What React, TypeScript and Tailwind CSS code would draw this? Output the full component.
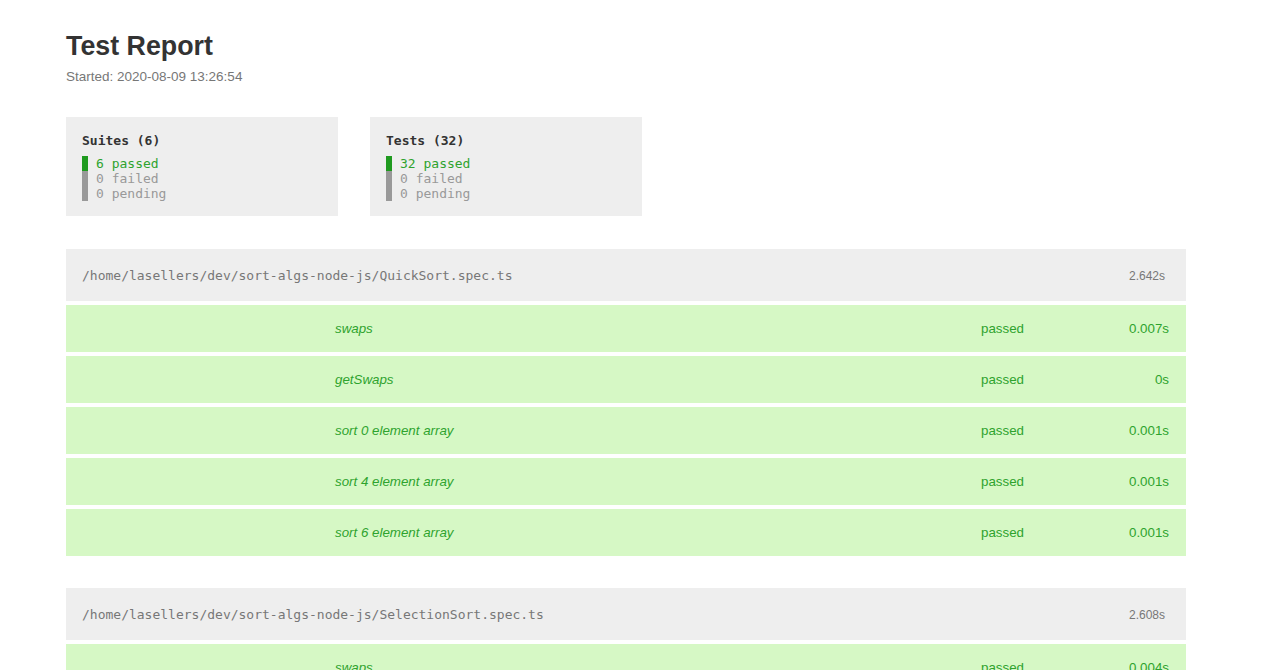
const suites = [
	{
		path: "/home/lasellers/dev/sort-algs-node-js/QuickSort.spec.ts",
		time: "2.642s",
		tests: [
			{ title: "swaps", time: "0.007s" },
			{ title: "getSwaps", time: "0s" },
			{ title: "sort 0 element array", time: "0.001s" },
			{ title: "sort 4 element array", time: "0.001s" },
			{ title: "sort 6 element array", time: "0.001s" },
		],
	},
	{
		path: "/home/lasellers/dev/sort-algs-node-js/SelectionSort.spec.ts",
		time: "2.608s",
		tests: [
			{ title: "swaps", time: "0.004s" },
			{ title: "getSwaps", time: "0s" },
			{ title: "sort 0 element array", time: "0.001s" },
			{ title: "sort 4 element array", time: "0s" },
			{ title: "sort 6 element array", time: "0.001s" },
		],
	},
	{
		path: "/home/lasellers/dev/sort-algs-node-js/BubbleSort.spec.ts",
		time: "2.611s",
		tests: [
			{ title: "swaps", time: "0.005s" },
			{ title: "getSwaps", time: "0s" },
			{ title: "sort 0 element array", time: "0.001s" },
			{ title: "sort 4 element array", time: "0.001s" },
			{ title: "sort 6 element array", time: "0s" },
		],
	},
];

export default function App() {
	return (
		<div className="min-h-screen bg-white pb-10 font-['Liberation_Sans',Arial,sans-serif] text-[#333]">
			<div className="ml-[66px] w-[1120px] pt-[31px]">
				<h1 className="text-[26.8px] font-bold leading-[30px] text-[#333]">Test Report</h1>
				<div className="mt-2 text-[13.5px] leading-4 text-[#777]">Started: 2020-08-09 13:26:54</div>

				<div className="mt-8 flex gap-8">
					<Summary title="Suites (6)" passed={6} />
					<Summary title="Tests (32)" passed={32} />
				</div>

				<div className="mt-[33px] flex flex-col gap-8">
					{suites.map((s) => (
						<div key={s.path} className="flex flex-col gap-1">
							<div className="flex h-[52px] items-center justify-between bg-[#eeeeee] pt-[2px] pr-[21px] pl-4">
								<span className="font-['DejaVu_Sans_Mono',monospace] text-[13px] text-[#777]">{s.path}</span>
								<span className="text-[12px] text-[#777]">{s.time}</span>
							</div>
							{s.tests.map((t) => (
								<div
									key={t.title}
									className="flex h-[47px] items-center bg-[#d6f8c5] pr-[17px] pl-[269px] text-[13.33px] text-[#2ea32e]"
								>
									<span className="w-[646px] italic">{t.title}</span>
									<span>passed</span>
									<span className="ml-auto">{t.time}</span>
								</div>
							))}
						</div>
					))}
				</div>
			</div>
		</div>
	);
}

function Summary({ title, passed }: { title: string; passed: number }) {
	return (
		<div className="h-[99px] w-[272px] bg-[#eeeeee] px-4 pt-4 font-['DejaVu_Sans_Mono',monospace] text-[13px] leading-[15px]">
			<div className="font-bold text-[#333]">{title}</div>
			<div className="mt-2 flex flex-col">
				<div className="border-l-[6px] border-[#1f9a1f] pl-2 text-[#2ea32e]">{passed} passed</div>
				<div className="border-l-[6px] border-[#999] pl-2 text-[#999]">0 failed</div>
				<div className="border-l-[6px] border-[#999] pl-2 text-[#999]">0 pending</div>
			</div>
		</div>
	);
}
